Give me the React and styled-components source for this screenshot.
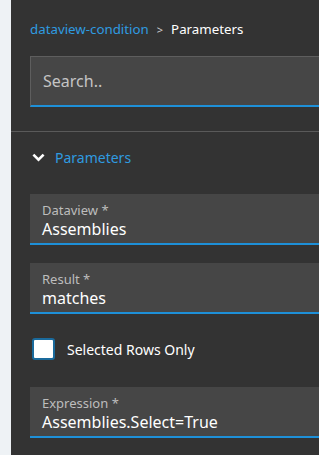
import React from 'react'
import styled, { createGlobalStyle } from 'styled-components'

const Global = createGlobalStyle`
  html, body {
    margin: 0;
    padding: 0;
    background: #eef2f5;
    overflow: hidden;
    font-family: "Noto Sans", "Open Sans", sans-serif;
  }
`

const Panel = styled.div`
  margin-left: 11px;
  width: 308px;
  height: 455px;
  background: #333333;
  overflow: hidden;
`

const Top = styled.div`
  padding: 20px 0 24px 19px;
`

const Crumbs = styled.div`
  display: flex;
  align-items: center;
  gap: 8px;
  font-size: 13.3px;
  height: 18px;
  margin-bottom: 18px;
`

const CrumbLink = styled.span`
  color: #2f9be0;
`

const CrumbSep = styled.span`
  color: #cfcfcf;
  font-size: 11px;
`

const CrumbCurrent = styled.span`
  color: #ffffff;
`

const SearchBox = styled.div`
  height: 51px;
  width: 320px;
  box-sizing: border-box;
  background: #464646;
  border: 1px solid #5e5e5e;
  border-bottom: 2px solid #1e90d8;
  display: flex;
  align-items: center;
  padding-left: 12px;
  font-size: 16px;
  color: #c4c4c4;
`

const Divider = styled.div`
  height: 1px;
  background: #5a5a5a;
`

const Body = styled.div`
  padding: 14px 0 0 19px;
`

const SectionHead = styled.div`
  display: flex;
  align-items: center;
  gap: 10px;
  height: 22px;
  color: #2f9be0;
  font-size: 14px;
  padding-left: 2px;
  margin-bottom: 26px;
`

const Field = styled.div`
  height: 51px;
  width: 320px;
  box-sizing: border-box;
  background: #464646;
  border-bottom: 2px solid #1e90d8;
  padding: 8px 0 0 12px;
  margin-bottom: ${p => p.$gap ?? 18}px;
`

const Label = styled.div`
  font-size: 13px;
  line-height: 17px;
  color: #bdbdbd;
`

const Value = styled.div`
  font-size: 16px;
  line-height: 21px;
  color: #ffffff;
`

const CheckRow = styled.label`
  display: flex;
  align-items: center;
  gap: 12px;
  height: 22px;
  padding-left: 2px;
  margin: 24px 0 27px;
  font-size: 14px;
  color: #ffffff;
`

const Box = styled.span`
  width: 23px;
  height: 22px;
  box-sizing: border-box;
  border: 2px solid #1a6a9c;
  border-radius: 3px;
  background: #ffffff;
`

export default function App() {
  return (
    <>
      <Global />
      <Panel>
        <Top>
          <Crumbs>
            <CrumbLink>dataview-condition</CrumbLink>
            <CrumbSep>&gt;</CrumbSep>
            <CrumbCurrent>Parameters</CrumbCurrent>
          </Crumbs>
          <SearchBox>Search..</SearchBox>
        </Top>
        <Divider />
        <Body>
          <SectionHead>
            <svg width="13" height="9" viewBox="0 0 13 9">
              <path d="M1.4 1.6 L6.5 6.7 L11.6 1.6" fill="none" stroke="#ffffff" strokeWidth="2.6" />
            </svg>
            Parameters
          </SectionHead>
          <Field>
            <Label>Dataview *</Label>
            <Value>Assemblies</Value>
          </Field>
          <Field $gap={0}>
            <Label>Result *</Label>
            <Value>matches</Value>
          </Field>
          <CheckRow>
            <Box />
            Selected Rows Only
          </CheckRow>
          <Field>
            <Label>Expression *</Label>
            <Value>Assemblies.Select=True</Value>
          </Field>
        </Body>
      </Panel>
    </>
  )
}
